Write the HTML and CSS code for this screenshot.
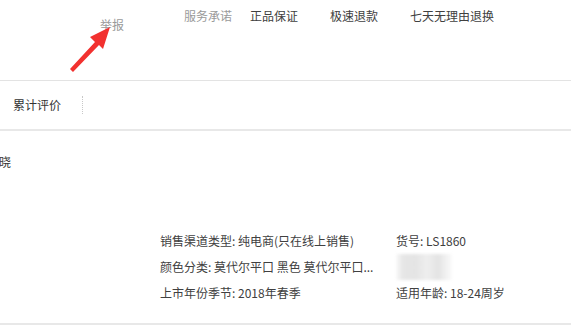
FILE: index.html
```html
<!DOCTYPE html>
<html>
<head>
<meta charset="utf-8">
<link rel="stylesheet" href="styles.css">
</head>
<body>
<div class="page">
  <div class="top">
    <div class="report">举报</div>
    <div class="promise">
      <span class="label">服务承诺</span>
      <span class="item">正品保证</span>
      <span class="item">极速退款</span>
      <span class="item">七天无理由退换</span>
    </div>
    <svg class="arrow" width="60" height="60" viewBox="0 0 60 60">
      <path d="M2 51 L27 24 L22 19 L42 9 L35 31 L31 27 L5 54 Z" fill="#f2312f"/>
    </svg>
  </div>
  <div class="tabs">
    <span class="tab">累计评价</span>
    <span class="sep"></span>
  </div>
  <div class="content">
    <div class="shop">晓</div>
    <div class="attrs">
      <div class="row"><span class="c1">销售渠道类型: 纯电商(只在线上销售)</span><span class="c2">货号: LS1860</span></div>
      <div class="row"><span class="c1">颜色分类: 莫代尔平口 黑色 莫代尔平口...</span><span class="c2"><span class="blur"></span></span></div>
      <div class="row"><span class="c1">上市年份季节: 2018年春季</span><span class="c2">适用年龄: 18-24周岁</span></div>
    </div>
  </div>
</div>
</body>
</html>
```

FILE: styles.css
```css
* { box-sizing: border-box; }
html, body { margin: 0; padding: 0; background: #fff; }
body {
  font-family: "Noto Sans CJK SC", "Noto Sans", sans-serif;
  font-size: 12px;
  color: #404040;
  width: 571px;
  height: 327px;
  overflow: hidden;
}
.page { width: 571px; }
.top {
  position: relative;
  height: 81px;
  border-bottom: 1px solid #e3e3e3;
  display: flex;
}
.report {
  color: #9a9a9a;
  margin: 16px 0 0 100px;
  line-height: 18px;
  height: 18px;
}
.promise {
  display: flex;
  margin: 7px 0 0 60px;
  line-height: 18px;
  height: 18px;
}
.promise .label { color: #9a9a9a; margin-right: 18px; }
.promise .item { color: #404040; margin-right: 32px; }
.arrow {
  position: absolute;
  left: 68px;
  top: 18px;
}
.tabs {
  height: 50px;
  border-bottom: 2px solid #e8e8e8;
  display: flex;
  align-items: center;
  padding-left: 13px;
}
.tab { color: #333; line-height: 18px; }
.sep {
  width: 0;
  height: 18px;
  border-left: 1px dotted #c8c8c8;
  margin-left: 21px;
}
.content {
  height: 194px;
  border-bottom: 2px solid #e8e8e8;
  position: relative;
}
.shop {
  color: #333;
  margin-left: -1px;
  padding-top: 22px;
  line-height: 18px;
  height: 101px;
}
.attrs { padding-left: 160px; }
.row { display: flex; height: 26px; line-height: 18px; }
.c1 { width: 236px; white-space: nowrap; }
.c2 { white-space: nowrap; }
.blur {
  display: inline-block;
  width: 56px;
  height: 26px;
  margin-top: -4px;
  background: linear-gradient(90deg, #fafafa 0%, #e6e6e6 12%, #e4e4e4 35%, #eeeeee 55%, #e3e3e3 75%, #fbfbfb 100%);
  filter: blur(1.5px);
  vertical-align: top;
}
```
